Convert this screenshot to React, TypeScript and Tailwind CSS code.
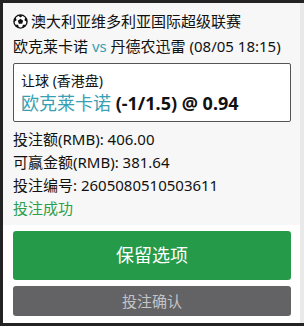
import React from "react";

function Ball() {
  const pent = (cx: number, cy: number, r: number, rot: number) =>
    Array.from({ length: 5 })
      .map((_, i) => {
        const a = ((rot + i * 72 - 90) * Math.PI) / 180;
        return `${(cx + r * Math.cos(a)).toFixed(2)},${(cy + r * Math.sin(a)).toFixed(2)}`;
      })
      .join(" ");
  const outer = [0, 72, 144, 216, 288].map((deg) => {
    const a = ((deg - 90) * Math.PI) / 180;
    return { x: 8 + 7.2 * Math.cos(a), y: 8 + 7.2 * Math.sin(a), deg };
  });
  return (
    <svg width="15" height="15" viewBox="0 0 16 16" className="shrink-0">
      <defs>
        <clipPath id="bc">
          <circle cx="8" cy="8" r="7" />
        </clipPath>
      </defs>
      <circle cx="8" cy="8" r="7" fill="#fff" />
      <g clipPath="url(#bc)" fill="#111">
        <polygon points={pent(8, 8, 3, 0)} />
        {outer.map((o, i) => (
          <polygon key={i} points={pent(o.x, o.y, 2.8, o.deg + 36)} />
        ))}
      </g>
      <circle cx="8" cy="8" r="7" fill="none" stroke="#111" strokeWidth="1.4" />
    </svg>
  );
}

export default function App() {
  return (
    <div
      className="w-[304px] h-[326px] bg-[#232323] pt-[3px] pb-[3px] pl-[3px] flex"
      style={{ fontFamily: '"Noto Sans", "Noto Sans CJK SC", sans-serif' }}
    >
      <div className="w-[297px] flex flex-col">
        <div className="bg-[#f7f7f7] pl-[10px] pr-[9px] pt-[6px] pb-[5px] text-[15px] text-[#111]">
          <div className="flex items-center gap-[3px] leading-[25px] h-[25px]">
            <Ball />
            <span>澳大利亚维多利亚国际超级联赛</span>
          </div>
          <div className="leading-[24px] h-[24px]">
            欧克莱卡诺 <span className="text-[#3a9fb3]">vs</span> 丹德农迅雷 (08/05 18:15)
          </div>
          <div className="mt-[5px] bg-white border border-[#555] rounded-[2px] px-[7px] pt-[7px] pb-[6px]">
            <div className="text-[14px] leading-[20px]">让球 (香港盘)</div>
            <div className="text-[18px] leading-[24px]">
              <span className="text-[#3a9fb3]">欧克莱卡诺</span>{" "}
              <span className="font-bold text-[#111]">(-1/1.5) @ 0.94</span>
            </div>
          </div>
          <div className="mt-[6px] leading-[23px]">
            <div>投注额(RMB): 406.00</div>
            <div>可赢金额(RMB): 381.64</div>
            <div>投注编号: 2605080510503611</div>
            <div className="text-[#2b9f4c]">投注成功</div>
          </div>
        </div>
        <div className="flex-1 bg-white pl-[10px] pr-[9px] pt-[6px] flex flex-col gap-[6px]">
          <button className="h-[49px] rounded-[3px] bg-[#259a48] text-white text-[18px] flex items-center justify-center">
            保留选项
          </button>
          <button className="h-[30px] rounded-[3px] bg-[#636366] text-[#c4c4c6] text-[15px] flex items-center justify-center">
            投注确认
          </button>
        </div>
      </div>
      <div className="w-[4px] bg-[#e9e9e9]" />
    </div>
  );
}
